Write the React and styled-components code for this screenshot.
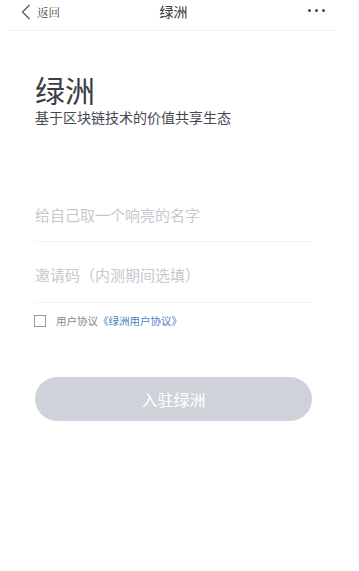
import React, { useState } from 'react';
import styled, { createGlobalStyle } from 'styled-components';

const GlobalStyle = createGlobalStyle`
body {
    margin: 0;
    background: #fff;
    font-family: "Noto Sans CJK SC", "Noto Sans", sans-serif;
}
`

const App = () => {
    const [agree, setAgree] = useState(false);

    return (
        <Page>
            <GlobalStyle />
            <Header>
                <Back>
                    <svg width="12" height="16" viewBox="0 0 12 16">
                        <path d="M9.5 1 L2.5 8 L9.5 15" fill="none" stroke="#555" strokeWidth="1.2" />
                    </svg>
                    <span>返回</span>
                </Back>
                <Title>绿洲</Title>
                <More>
                    <i /><i /><i />
                </More>
            </Header>

            <Content>
                <Brand>绿洲</Brand>
                <Slogan>基于区块链技术的价值共享生态</Slogan>

                <Fields>
                    <Field placeholder='给自己取一个响亮的名字' />
                    <Field placeholder='邀请码（内测期间选填）' />
                </Fields>

                <Agreement>
                    <Check checked={agree} onClick={() => setAgree(!agree)} />
                    <span>用户协议</span>
                    <a href='#'>《绿洲用户协议》</a>
                </Agreement>

                <Submit disabled={!agree}>入驻绿洲</Submit>
            </Content>
        </Page>
    )
}

const Page = styled.div`
width: 359px;
min-height: 571px;
background: #fff;
`

const Header = styled.div`
height: 30px;
margin: 0 24px 0 8px;
border-bottom: 1px solid #f0f0f2;
display: flex;
align-items: center;
justify-content: space-between;
position: relative;
`

const Back = styled.div`
display: flex;
align-items: center;
gap: 5px;
padding-left: 12px;
margin-top: -6px;

span {
    font-family: "Noto Serif CJK SC", "Noto Sans CJK SC", serif;
    font-size: 11.5px;
    color: #444;
}
`

const Title = styled.div`
position: absolute;
left: 50%;
top: 0;
transform: translateX(-50%);
margin-left: 2px;
line-height: 22px;
font-size: 14px;
color: #333;
`

const More = styled.div`
display: flex;
gap: 4px;
margin-top: -10px;
margin-right: 10px;

i {
    width: 3px;
    height: 3px;
    border-radius: 50%;
    background: #444;
}
`

const Content = styled.div`
padding: 40px 48px 0 34px;
`

const Brand = styled.h1`
margin: 0;
font-size: 30px;
font-weight: 400;
line-height: 36px;
color: #3b3e48;
padding-left: 1px;
`

const Slogan = styled.p`
margin: 0;
font-size: 14px;
line-height: 20px;
color: #454750;
padding-left: 1px;
`

const Fields = styled.div`
margin-top: 61px;
display: flex;
flex-direction: column;
`

const Field = styled.input`
-webkit-appearance: none;
box-sizing: border-box;
border: none;
border-bottom: 1px solid #f1f2f4;
height: 61px;
padding: 5px 0 0 1px;
font-family: inherit;
font-size: 15px;
background: transparent;

&:first-child {
    height: 54px;
    padding-top: 0;
}

&::placeholder {
    color: #c6c8cf;
}

&:focus {
    outline: none;
}
`

const Agreement = styled.div`
display: flex;
align-items: center;
height: 15px;
margin-top: 10px;
font-size: 10.5px;
color: #84878f;

span {
    margin-left: 10px;
}

a {
    color: #4f80c4;
    text-decoration: none;
}
`

const Check = styled.div`
width: 10px;
height: 10px;
border: 1px solid ${props => props.checked ? '#4f80c4' : '#999'};
background: ${props => props.checked ? '#4f80c4' : 'transparent'};
cursor: pointer;
`

const Submit = styled.button`
display: block;
width: 100%;
margin-top: 49px;
margin-left: 1px;
height: 44px;
border: none;
border-radius: 22px;
background: #d0d2d9;
color: #fff;
font-family: inherit;
font-size: 16px;
cursor: pointer;
`

export default App
